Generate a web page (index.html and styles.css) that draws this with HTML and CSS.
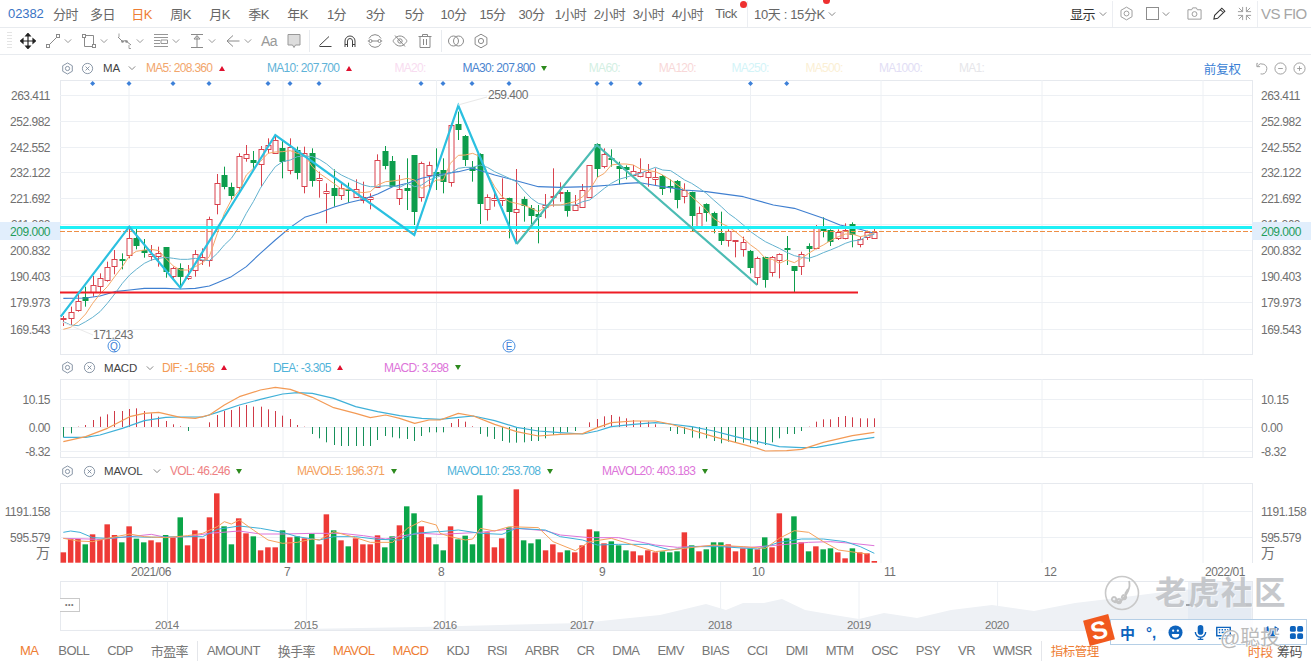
FILE: index.html
```html
<!DOCTYPE html>
<html lang="zh">
<head>
<meta charset="utf-8">
<title>02382</title>
<link rel="stylesheet" href="styles.css">
</head>
<body>
<svg class="defs" width="0" height="0">
  <symbol id="gear" viewBox="0 0 16 16"><path d="M8 1.2l5.9 3.4v6.8L8 14.8l-5.9-3.4V4.6z" fill="none" stroke="currentColor" stroke-linejoin="round"/><circle cx="8" cy="8" r="2.6" fill="none" stroke="currentColor"/></symbol>
  <symbol id="close" viewBox="0 0 16 16"><circle cx="8" cy="8" r="6.3" fill="none" stroke="currentColor"/><path d="M5.6 5.6l4.8 4.8M10.4 5.6l-4.8 4.8" stroke="currentColor"/></symbol>
  <symbol id="chev" viewBox="0 0 8 8"><path d="M.8 2.4L4 5.6l3.2-3.2" fill="none" stroke="currentColor"/></symbol>
</svg>
<div class="app">
  <header class="topbar">
    <span class="code">02382</span>
    <span class="tab tab-first">分时</span><span class="tab">多日</span><span class="tab active">日K</span><span class="tab">周K</span><span class="tab">月K</span><span class="tab">季K</span><span class="tab">年K</span><span class="tab">1分</span><span class="tab">3分</span><span class="tab">5分</span><span class="tab">10分</span><span class="tab">15分</span><span class="tab">30分</span><span class="tab">1小时</span><span class="tab">2小时</span><span class="tab">3小时</span><span class="tab">4小时</span>
    <span class="tab tab-tick">Tick<i class="dot"></i></span>
    <span class="vsep"></span>
    <span class="multi">10天 : 15分K<i class="dot dot-b"></i></span>
    <svg class="chev"><use href="#chev"/></svg>
    <span class="spacer"></span>
    <span class="show">显示</span>
    <svg class="chev chev-show"><use href="#chev"/></svg>
    <span class="vsep vsep-r"></span>
    <svg class="ico ico-gear"><use href="#gear"/></svg>
    <span class="square"></span>
    <svg class="chev chev-sq"><use href="#chev"/></svg>
    <svg class="ico ico-cam" viewBox="0 0 16 16"><path d="M1 4h4l1-2h4l1 2h4v10H1z" fill="none" stroke="currentColor"/><circle cx="8" cy="8.6" r="2.6" fill="none" stroke="currentColor"/></svg>
    <svg class="ico ico-pen" viewBox="0 0 16 16"><path d="M2 14l.8-4L10.500 2.300l3.200 3.200L6 13.200zM9 4l3.200 3.200" fill="none" stroke="#333" stroke-width="1.100"/></svg>
    <svg class="ico ico-zip" viewBox="0 0 16 16"><path d="M6 1v5H1M10 1v5h5M6 15v-5H1M10 15v-5h5M6 6L2 2M10 6l4-4M6 10l-4 4M10 10l4 4" fill="none" stroke="currentColor"/></svg>
    <span class="vsep vsep-vs"></span>
    <span class="vs">VS FIO</span>
  </header>

  <nav class="toolbar">
    <span class="grip"></span>
    <svg class="t t-dark" viewBox="0 0 16 16"><path d="M8 1v14M1 8h14M8 .5L5.800 3h4.400zM8 15.500L5.800 13h4.400zM.5 8L3 5.800v4.400zM15.500 8L13 5.800v4.400z" fill="#222" stroke="#222" stroke-width="1.200"/></svg>
    <svg class="t" viewBox="0 0 16 16"><path d="M4.500 11.500l7-7" stroke="currentColor"/><rect x="1.500" y="11.500" width="3" height="3" fill="none" stroke="currentColor"/><rect x="11.500" y="1.500" width="3" height="3" fill="none" stroke="currentColor"/></svg><svg class="c"><use href="#chev"/></svg>
    <svg class="t" viewBox="0 0 16 16"><path d="M4 2.500h8.500V12M12 13.500H3.500V4" fill="none" stroke="currentColor"/><rect x="1.500" y="1.500" width="3" height="3" fill="none" stroke="currentColor"/><rect x="11.500" y="11.500" width="3" height="3" fill="none" stroke="currentColor"/></svg><svg class="c"><use href="#chev"/></svg>
    <svg class="t" viewBox="0 0 16 16"><path d="M1 4l4.500 4.500 3-1L14 12" fill="none" stroke="currentColor"/><circle cx="5.500" cy="8.500" r="1.300" fill="currentColor"/><circle cx="9.500" cy="8.500" r="1.300" fill="currentColor"/><path d="M2 .5v3.500M12 12v3.500h2" fill="none" stroke="currentColor" stroke-width=".8"/></svg><svg class="c"><use href="#chev"/></svg>
    <svg class="t" viewBox="0 0 16 16"><path d="M1 1.500h14M1 4.500h14M1 7.500h6M1 10.500h6M1 13.500h14M8 7h6.500v3.500H8z" fill="none" stroke="currentColor" stroke-width=".9"/></svg><svg class="c"><use href="#chev"/></svg>
    <svg class="t" viewBox="0 0 16 16"><path d="M2 1.500h12M2 14.500h12M8 3v11.500M5 6l3-3.500L11 6z" fill="none" stroke="currentColor"/></svg><svg class="c"><use href="#chev"/></svg>
    <svg class="t" viewBox="0 0 16 16"><path d="M14.500 8H2M8 2.500L2 8l6 5.500" fill="none" stroke="currentColor"/></svg><svg class="c"><use href="#chev"/></svg>
    <span class="aa">Aa</span>
    <svg class="t t-g" viewBox="0 0 16 16"><path d="M2 1.500h12V12H9.500L8 14.500 6.500 12H2z" fill="#ddd" stroke="#999"/></svg>
    <span class="tsep"></span>
    <svg class="t t-dk" viewBox="0 0 16 16"><path d="M2.500 13.500h12M2.500 12.500L12 3.500" fill="none" stroke="currentColor"/></svg>
    <svg class="t t-dk" viewBox="0 0 16 16"><path d="M3 14V8a5 5 0 0 1 10 0v6M5.500 14V8a2.500 2.500 0 0 1 5 0v6M3 11.500h2.500M10.500 11.500H13" fill="none" stroke="currentColor"/></svg>
    <svg class="t" viewBox="0 0 16 16"><path d="M2 5.500a6.600 6.600 0 0 1 12 0M2 10.500a6.600 6.600 0 0 0 12 0M.8 8h14.400" fill="none" stroke="currentColor"/><circle cx="3.500" cy="8" r="1.500" fill="#fff" stroke="currentColor"/><circle cx="12.500" cy="8" r="1.500" fill="#fff" stroke="currentColor"/></svg>
    <svg class="t" viewBox="0 0 16 16"><path d="M1 8s2.500-5 7-5 7 5 7 5-2.500 5-7 5-7-5-7-5zM3 2.500l10 11" fill="none" stroke="currentColor"/><circle cx="8" cy="8" r="2.200" fill="none" stroke="currentColor"/></svg>
    <svg class="t" viewBox="0 0 16 16"><path d="M1.500 3.500h13M5.500 3.500V1.500h5v2M3 3.500V14.500h10V3.500M6.500 6v6M9.500 6v6" fill="none" stroke="currentColor"/></svg>
    <span class="tsep tsep-b"></span>
    <svg class="t" viewBox="0 0 16 16"><circle cx="5.500" cy="8" r="5" fill="none" stroke="currentColor"/><circle cx="10.500" cy="8" r="5" fill="none" stroke="currentColor"/></svg>
    <svg class="t"><use href="#gear"/></svg>
  </nav>

  <div class="head">
    <svg class="hi"><use href="#gear"/></svg>
    <svg class="hi hi-x1"><use href="#close"/></svg>
    <span class="name name-ma">MA</span>
    <svg class="chev chev-ma"><use href="#chev"/></svg>
    <span class="val c-ma5">MA5: 208.360<i class="up"></i></span>
    <span class="val c-ma10">MA10: 207.700<i class="up"></i></span>
    <span class="val c-ma20">MA20:</span>
    <span class="val c-ma30">MA30: 207.800<i class="down"></i></span>
    <span class="val c-ma60">MA60:</span>
    <span class="val c-ma120">MA120:</span>
    <span class="val c-ma250">MA250:</span>
    <span class="val c-ma500">MA500:</span>
    <span class="val c-ma1000">MA1000:</span>
    <span class="val c-ma1">MA1:</span>
    <span class="spacer"></span>
    <span class="adj">前复权</span>
    <svg class="hr" viewBox="0 0 14 14"><path d="M3 1.500h-1v3.500h3.500M2.500 4.500A5.500 5.500 0 1 1 6 12.800" fill="none" stroke="currentColor"/></svg>
    <svg class="hr" viewBox="0 0 14 14"><circle cx="7" cy="7" r="6" fill="none" stroke="currentColor"/><path d="M4.500 7h5" stroke="currentColor"/></svg>
    <svg class="hr" viewBox="0 0 14 14"><circle cx="7" cy="7" r="6" fill="none" stroke="currentColor"/><path d="M4.500 7h5M7 4.500v5" stroke="currentColor"/></svg>
  </div>
  <svg id="main" class="plot plot-main" viewBox="0 80 1311 275"></svg>

  <div class="head head-sub">
    <svg class="hi"><use href="#gear"/></svg>
    <svg class="hi hi-x2"><use href="#close"/></svg>
    <span class="name name-macd">MACD</span>
    <svg class="chev chev-macd"><use href="#chev"/></svg>
    <span class="val c-dif">DIF: -1.656<i class="up"></i></span>
    <span class="val c-dea">DEA: -3.305<i class="up"></i></span>
    <span class="val c-macd">MACD: 3.298<i class="down"></i></span>
  </div>
  <svg id="macd" class="plot plot-macd" viewBox="0 379 1311 79"></svg>

  <div class="head head-vol">
    <svg class="hi"><use href="#gear"/></svg>
    <svg class="hi hi-x2"><use href="#close"/></svg>
    <span class="name name-vol">MAVOL</span>
    <svg class="chev chev-vol"><use href="#chev"/></svg>
    <span class="val c-vol">VOL: 46.246<i class="down"></i></span>
    <span class="val c-v5">MAVOL5: 196.371<i class="down"></i></span>
    <span class="val c-v10">MAVOL10: 253.708<i class="down"></i></span>
    <span class="val c-v20">MAVOL20: 403.183<i class="down"></i></span>
  </div>
  <svg id="vol" class="plot plot-vol" viewBox="0 483 1311 98"></svg>
  <div class="navwrap">
    <svg id="nav" class="plot plot-nav" viewBox="0 581 1311 50"></svg>
    <span class="more">•••</span>
  </div>

  <footer class="bottom">
    <span class="b b-ma on">MA</span><span class="b">BOLL</span><span class="b">CDP</span><span class="b">市盈率</span><span class="bsep"></span><span class="b">AMOUNT</span><span class="b">换手率</span><span class="b on">MAVOL</span><span class="b on">MACD</span><span class="b">KDJ</span><span class="b">RSI</span><span class="b">ARBR</span><span class="b">CR</span><span class="b">DMA</span><span class="b">EMV</span><span class="b">BIAS</span><span class="b">CCI</span><span class="b">DMI</span><span class="b">MTM</span><span class="b">OSC</span><span class="b">PSY</span><span class="b">VR</span><span class="b">WMSR</span><span class="bsep"></span><span class="b on mgr">指标管理</span>
    <span class="spacer"></span>
    <span class="b on b-r">时段</span><span class="b b-r2">筹码</span>
  </footer>
</div>

<div class="watermark">
  <svg class="wm-logo" viewBox="0 0 36 36"><circle cx="18" cy="18" r="16.500" fill="none" stroke="#c9c9c9" stroke-width="1.600"/><path d="M25 6c2 6-2 14-7 19-3 2-7 3-9 1M10 22a2.200 2.200 0 1 0 .1 0M15 24a2.200 2.200 0 1 0 .1 0M20 20a2.200 2.200 0 1 0 .1 0M24 14l-3 5" fill="none" stroke="#c4c4c4" stroke-width="1.800"/></svg>
  <span class="wm-text">老虎社区</span>
</div>
<div class="ime">
  <span class="ime-s"><b>S</b></span>
  <div class="ime-bar">
    <b class="ime-zh">中</b>
    <b class="ime-p">°,</b>
    <svg class="ime-i" viewBox="0 0 16 16"><circle cx="8" cy="8" r="7.500"/><circle cx="5.500" cy="6" r="1.200" fill="#fff"/><circle cx="10.500" cy="6" r="1.200" fill="#fff"/><path d="M4 9.500h8a4 4 0 0 1-8 0z" fill="#fff"/></svg>
    <svg class="ime-i ime-mic" viewBox="0 0 16 16"><rect x="5" y="0" width="6" height="10.500" rx="3"/><path d="M2.500 7.500a5.500 5.500 0 0 0 11 0M8 13v3M5 15.500h6" fill="none" stroke="#0d63bd" stroke-width="1.500"/></svg>
    <svg class="ime-i ime-kb" viewBox="0 0 16 16"><path d="M.8 2.500h14.400v9H.8zM3 5h1.500M6 5h1.500M9 5h1.500M12 5h1M3 8h1.500M6 8h4.500M12 8h1M3 14.500h10" fill="none" stroke="#0d63bd" stroke-width="1.500"/></svg>
    <svg class="ime-i" viewBox="0 0 16 16"><path d="M4.500 1L0 4l2 3.500 2-1V15h8V6.500l2 1L16 4l-4.500-3a3.500 3.500 0 0 1-7 0z"/></svg>
    <svg class="ime-i" viewBox="0 0 16 16"><rect x="1" y="1" width="6.300" height="6.300" rx="1.800"/><rect x="8.700" y="1" width="6.300" height="6.300" rx="1.800"/><rect x="1" y="8.700" width="6.300" height="6.300" rx="1.800"/><rect x="8.700" y="8.700" width="6.300" height="6.300" rx="1.800"/></svg>
  </div>
  <span class="ime-mark">@聪投</span>
</div>
<script src="chart.js"></script>
</body>
</html>
```
FILE: styles.css
```css
* { box-sizing: border-box; }
html, body { margin: 0; padding: 0; background: #fff; }
body {
  width: 1311px; height: 669px; overflow: hidden; position: relative;
  font-family: "Liberation Sans", "Noto Sans CJK SC", sans-serif;
  color: #666;
}
i { font-style: normal; }
.defs { position: absolute; }
.app { display: flex; flex-direction: column; height: 669px; }
.spacer { flex: 1; }

/* top bar */
.topbar {
  height: 28px; flex: none; display: flex; align-items: center;
  border-bottom: 1px solid #e8ebef; font-size: 13px; letter-spacing: -.5px; white-space: nowrap;
}
.code { width: 48px; padding-left: 8px; color: #3a74c4; letter-spacing: -.1px; }
.tab { width: 39px; text-align: center; color: #666; position: relative; flex: none; }
.tab-first { width: 35px; }
.tab.active { color: #ee7d33; }
.tab-tick { margin-left: 3px; width: 32px; }
.dot { position: absolute; width: 7px; height: 7px; border-radius: 50%; background: #ee3030; right: -5px; top: -5px; }
.vsep { width: 1px; height: 26px; background: #eceef2; margin-left: 5px; flex: none; }
.multi { margin-left: 6px; color: #666; position: relative; letter-spacing: -.35px; }
.dot-b { right: -5px; top: -7px; }
.chev { width: 8px; height: 8px; color: #888; flex: none; margin-left: 3px; }
.show { color: #333; }
.chev-show { margin-left: 4px; }
.vsep-r { margin-left: 5px; }
.ico { width: 15px; height: 15px; color: #999; flex: none; display: block; }
.ico-gear { margin-left: 6px; }
.square { width: 13px; height: 13px; border: 1px solid #8d8d8d; margin-left: 12px; flex: none; }
.chev-sq { margin-left: 3px; }
.ico-cam { margin-left: 17px; }
.ico-pen { margin-left: 10px; }
.ico-zip { margin-left: 10px; }
.vsep-vs { margin-left: 5px; }
.vs { font-size: 15px; color: #a6a6a6; margin-left: 3px; letter-spacing: -.6px; width: 50px; }

/* toolbar */
.toolbar {
  height: 27px; flex: none; display: flex; align-items: center; padding-left: 7px;
  border-bottom: 1px solid #e8ebef; color: #8a8a8a;
}
.grip { width: 5px; height: 18px; margin-right: 8px; background: repeating-linear-gradient(#e4e4e4 0 1px, transparent 1px 3px); flex: none; }
.t { width: 16px; height: 16px; flex: none; margin-right: 9px; display: block; }
.t-dark { color: #222; }
.t-dk { color: #444; }
.toolbar .t:has(+ .c) { margin-right: 3px; }
.c { width: 8px; height: 8px; color: #999; flex: none; margin-right: 9px; }
.aa { width: 16px; margin-right: 9px; font-size: 14px; color: #999; letter-spacing: -.5px; flex: none; text-align: center; }
.tsep { width: 1px; height: 22px; background: #e8ebef; margin: 0 7px 0 -2px; flex: none; }
.tsep-b { margin: 0 6px 0 -1px; }

/* pane heads */
.head {
  height: 25px; flex: none; display: flex; align-items: center; font-size: 12px;
  letter-spacing: -.7px; white-space: nowrap; padding-left: 61px; padding-top: 1px;
}
.head-sub { height: 24px; }
.hi { width: 13px; height: 13px; color: #6f7f92; flex: none; }
.hi-x1 { margin-left: 7px; }
.hi-x2 { margin-left: 9px; }
.name { color: #444; letter-spacing: -.2px; font-size: 11.500px; flex: none; }
.name-ma { margin-left: 9px; width: 25px; }
.name-macd { margin-left: 8px; width: 42px; }
.name-vol { margin-left: 8px; width: 49px; }
.chev-ma, .chev-macd, .chev-vol { margin-left: 0; }
.val { flex: none; }
.chev-ma + .val { margin-left: 10px; }
.chev-macd + .val { margin-left: 8px; }
.chev-vol + .val { margin-left: 9px; }
.up, .down { display: inline-block; margin-left: 6.500px; vertical-align: 1.500px; width: 0; height: 0; border-left: 3px solid transparent; border-right: 3px solid transparent; }
.up { border-bottom: 5px solid #e0102f; }
.down { border-top: 5px solid #2d8a1e; }
.c-ma5 { color: #f2a66c; width: 121px; } .c-ma10 { color: #5fb3d8; width: 127.500px; } .c-ma20 { color: #f8dcf0; width: 68px; }
.c-ma30 { color: #4a84cf; width: 126.300px; } .c-ma60 { color: #d3efe3; width: 70px; } .c-ma120 { color: #f8d8d8; width: 72.600px; }
.c-ma250 { color: #d3f4f8; width: 74px; } .c-ma500 { color: #fbefd4; width: 73.500px; } .c-ma1000 { color: #e2def5; width: 80px; } .c-ma1 { color: #e6e6ea; }
.c-dif { color: #f39a55; width: 111px; } .c-dea { color: #4fb3d9; width: 111px; } .c-macd { color: #dd74d9; }
.c-vol { color: #ee8183; width: 127px; } .c-v5 { color: #f3a05d; width: 150px; } .c-v10 { color: #4fb3d9; width: 155px; } .c-v20 { color: #dd74d9; }
.adj { color: #3a7fd5; font-size: 12.500px; letter-spacing: -.1px; margin-right: 14px; }
.hr { width: 13px; height: 13px; color: #999; margin-right: 6px; flex: none; }
.hr:last-child { margin-right: 5px; }

/* plots */
.plot { display: block; width: 1311px; flex: none; }
.plot-main { height: 275px; }
.plot-macd { height: 79px; }
.plot-vol { height: 98px; }
.plot-nav { height: 50px; }
.navwrap { position: relative; flex: none; height: 50px; }
.more {
  position: absolute; left: 60px; top: 17px; width: 20px; height: 14px; border: 1px solid #c9c9c9; border-left: 0;
  font-size: 7px; line-height: 12px; text-align: center; color: #777; letter-spacing: .5px; background: #fff;
}
.ax { font-family: "Liberation Sans", sans-serif; font-size: 12px; letter-spacing: -.5px; fill: #707070; }
.ax-cjk { font-family: "Noto Sans CJK SC", sans-serif; font-size: 14px; letter-spacing: 0; }
.ax-last { fill: #1f9d5b; }
.ax-nav { fill: #777; font-size: 11.500px; }

/* bottom */
.bottom {
  flex: 1; display: flex; align-items: center; font-size: 13px; letter-spacing: -.6px; white-space: nowrap;
  padding-left: 20px; padding-top: 1px; color: #777;
}
.b { margin-right: 18px; flex: none; }
.b-ma { margin-right: 20px; }
.b.on { color: #ee7d33; }
.bsep { width: 1px; height: 20px; background: #e4e6ea; margin: 0 9px 0 -9px; flex: none; }
.mgr { margin-right: 0; font-size: 12.500px; letter-spacing: -.45px; }
.b-r { margin-right: 4px; letter-spacing: -.45px; }
.b-r2 { margin-right: 9px; color: #555; letter-spacing: -.45px; }

/* overlays */
.watermark { position: absolute; left: 1104px; top: 575px; display: flex; align-items: center; }
.wm-logo { width: 36px; height: 36px; margin-right: 15px; }
.wm-text { font-size: 31.500px; letter-spacing: 1.500px; color: #c2c4c8; font-weight: 700; line-height: 36px; text-shadow: 1px 1px 0 rgba(255,255,255,.7); opacity: .92; }
.ime { position: absolute; left: 1085px; top: 615px; width: 224px; height: 34px; }
.ime-bar {
  position: absolute; left: 25px; top: 4px; width: 197px; height: 26px; background: rgba(255,255,255,.86);
  border: 1px solid #b5cfe6; display: flex; align-items: center; gap: 10px; padding-left: 9px; color: #0d63bd; font-size: 15px;
}
.ime-s {
  position: absolute; left: 1px; top: 2px; width: 26px; height: 26px; background: #f1591e; transform: rotate(-15deg); z-index: 1;
  display: flex; align-items: center; justify-content: center; color: #fff; font-size: 25px; line-height: 26px;
}
.ime-zh { font-size: 15px; width: 15px; margin-right: 1px; }
.ime-p { width: 12px; font-size: 15px; }
.ime-i { width: 15px; height: 15px; fill: #0d63bd; flex: none; }
.ime-mic { margin-right: -2px; }
.ime-kb { margin-right: 23px; }
.ime-mark {
  position: absolute; left: 135px; top: 11px; font-size: 20px; color: #b3b3b3; line-height: 24px; letter-spacing: 0;
  text-shadow: 1px 0 0 #fff, -1px 0 0 #fff, 0 1px 0 #fff; opacity: .9;
}
```
FILE: chart.js
```javascript
(function () {
  var GRID = '#edf0f4', EDGE = '#e6e9ee', RED = '#d9434e', GREEN = '#0d9d4c', BRED = '#ee3a36', BGREEN = '#0aa548';
  var VX = [129, 283, 436.5, 597, 750.5, 881, 1042, 1203];
  var L = 60, R = 1252;
  function px(i) { return 63.3 + 7.306 * i; }
  function Y(base, z) { return base + z / 3; }
  function line(x1, y1, x2, y2, c, w, extra) {
    return '<line x1="' + x1 + '" y1="' + y1 + '" x2="' + x2 + '" y2="' + y2 + '" stroke="' + c + '" stroke-width="' + (w || 1) + '" ' + (extra || '') + '/>';
  }
  function rect(x, y, w, h, fill, stroke) {
    return '<rect x="' + x + '" y="' + y + '" width="' + w + '" height="' + h + '" fill="' + fill + '"' + (stroke ? ' stroke="' + stroke + '"' : '') + '/>';
  }
  function text(x, y, s, cls, anchor) {
    return '<text class="ax ' + (cls || '') + '" x="' + x + '" y="' + y + '"' + (anchor ? ' text-anchor="' + anchor + '"' : '') + '>' + s + '</text>';
  }
  // a, b: arrays of [zoomX, zoomY]; the second part starts 1320 zoom units further right
  function poly(a, b, base, c, w) {
    var pts = a.map(function (p) { return (p[0] / 3) + ',' + Y(base, p[1]); });
    (b || []).forEach(function (p) { pts.push((p[0] + 1320) / 3 + ',' + Y(base, p[1])); });
    return '<polyline fill="none" stroke="' + c + '" stroke-width="' + (w || 1) + '" stroke-linejoin="round" points="' + pts.join(' ') + '"/>';
  }
  function frame(top, bottom, hs) {
    var s = rect(L + .5, top + .5, R - L, bottom - top, '#fff', EDGE);
    VX.forEach(function (x) { s += line(x, top, x, bottom, GRID); });
    hs.forEach(function (y) { s += line(L, y + .5, R, y + .5, GRID); });
    return s;
  }

  /* candles: high, low, top, bottom, up */
  var C = [
    [678,708,684,686,1],[650,705,667,686,1],[605,665,632,658,1],[590,650,622,635,0],[558,620,586,608,1],[550,610,565,590,1],[515,575,530,568,1],[480,553,508,530,1],
    [490,538,508,514,0],[410,505,445,497,1],[412,478,445,470,0],[447,503,481,491,0],[465,512,492,498,1],[470,530,489,497,1],[472,563,472,548,0],[530,565,535,560,1],
    [520,592,535,563,0],[525,570,558,564,1],[480,560,493,540,1],[475,525,502,510,1],[380,530,388,512,1],[252,373,278,340,1],[230,298,255,290,0],[278,330,290,317,0],
    [190,305,198,290,1],[165,215,193,205,1],[183,238,210,220,0],[168,290,178,222,1],[145,190,165,178,1],[135,190,150,188,1],[150,265,175,218,0],[145,253,172,240,1],
    [170,268,180,250,0],[170,310,188,288,1],[175,290,190,275,0],[245,323,265,271,1],[280,400,303,310,1],[238,350,295,320,0],[280,330,295,316,1],[278,338,298,300,0],
    [268,320,296,320,1],[275,340,322,330,1],[310,358,320,325,1],[193,290,210,290,1],[168,238,184,230,0],[198,290,214,292,0],[255,345,298,325,1],[205,360,294,302,0],
    [195,405,195,365,0],[215,335,220,322,1],[215,300,226,255,1],[175,300,245,257,0],[205,310,240,275,0],[100,290,104,275,1],[65,150,103,122,0],[135,228,138,210,0],
    [213,275,230,243,0],[190,402,193,342,0],[313,392,320,355,1],[300,350,325,331,1],[265,348,325,332,1],[323,445,325,368,0],[237,460,358,367,1],[320,395,328,348,0],
    [345,402,355,378,0],[345,460,372,380,0],[312,385,345,352,1],[235,350,317,319,1],[277,335,307,309,1],[300,380,306,362,0],[315,360,344,358,1],[282,352,300,352,1],
    [225,320,225,320,1],[160,262,162,236,0],[175,235,192,228,1],[178,230,205,212,0],[215,283,228,236,0],[226,268,230,240,0],[225,260,242,255,1],[205,262,245,257,1],
    [222,290,247,263,1],[235,285,260,267,1],[255,315,258,296,0],[268,308,287,292,0],[270,355,274,332,0],[280,340,301,319,1],[305,425,307,380,0],[350,415,370,410,1],
    [340,395,343,371,0],[365,430,370,408,0],[365,465,430,455,0],[418,470,422,448,1],[450,502,450,453,1],[440,500,455,475,1],[480,550,483,533,0],[500,585,505,563,1],
    [500,593,502,570,0],[498,560,502,548,1],[490,565,491,508,1],[438,525,475,482,0],[528,607,528,542,0],[485,555,493,530,1],[460,515,467,476,0],[405,478,415,476,1],
    [382,442,409,423,0],[418,468,420,455,0],[418,450,426,445,1],[400,448,420,445,1],[397,472,402,435,0],[440,472,447,463,1],[422,450,426,442,1],[410,447,426,445,1]
  ];

  var ma5a = [[190,718],[212,712],[235,695],[257,672],[278,640],[300,612],[322,590],[344,560],[367,530],[389,497],[409,484],[433,480],[454,478],[476,482],[497,505],[520,528],[541,540],[563,540],[586,530],[608,518],[628,500],[652,430],[673,370],[694,330],[718,300],[739,255],[760,235],[781,215],[804,190],[826,186],[848,185],[871,182],[892,190],[914,195],[937,230],[958,250],[980,265],[1001,280],[1024,297],[1045,298],[1067,305],[1090,308],[1111,305],[1133,285],[1157,275],[1178,273],[1199,270],[1222,265],[1244,270],[1265,295],[1287,285],[1309,270]];
  var ma5b = [[10,270],[31,220],[55,196],[76,195],[98,190],[121,200],[142,250],[164,290],[186,320],[208,335],[229,340],[250,345],[274,355],[295,365],[316,352],[339,345],[361,345],[382,340],[406,335],[428,320],[449,300],[472,262],[493,250],[514,225],[536,222],[558,222],[580,225],[601,237],[625,242],[646,245],[668,255],[692,270],[712,285],[734,300],[755,320],[778,340],[799,360],[821,385],[844,400],[865,410],[886,425],[910,445],[932,465],[953,480],[976,505],[997,508],[1018,520],[1040,510],[1063,518],[1085,505],[1106,490],[1130,475],[1150,465],[1171,452],[1195,440],[1216,432],[1237,432],[1261,440],[1283,435],[1303,428]];
  var ma10a = [[190,695],[212,705],[235,707],[257,695],[278,682],[300,665],[322,640],[344,612],[367,580],[389,555],[409,538],[433,520],[454,510],[476,505],[497,502],[520,505],[541,508],[563,508],[586,505],[608,510],[628,512],[652,490],[673,465],[694,445],[718,410],[739,370],[760,335],[781,295],[804,260],[826,230],[848,215],[871,210],[892,200],[914,198],[937,200],[958,208],[980,222],[1001,240],[1024,255],[1045,265],[1067,275],[1090,285],[1111,290],[1133,290],[1157,287],[1178,288],[1199,292],[1222,280],[1244,290],[1265,285],[1287,270],[1309,262]];
  var ma10b = [[10,255],[31,250],[55,235],[76,232],[98,232],[121,225],[142,232],[164,245],[186,255],[208,265],[229,275],[250,300],[274,325],[295,340],[316,345],[339,345],[361,345],[382,345],[406,345],[428,335],[449,330],[472,312],[493,295],[514,280],[536,268],[558,262],[580,255],[601,250],[625,240],[646,232],[668,240],[692,242],[712,255],[734,270],[755,280],[778,295],[799,310],[821,330],[844,350],[865,370],[886,385],[910,405],[932,425],[953,440],[976,455],[997,465],[1018,475],[1040,487],[1063,497],[1085,502],[1106,505],[1130,497],[1150,488],[1171,480],[1195,470],[1216,460],[1237,453],[1261,450],[1283,437],[1303,433]];
  var ma30a = [[190,625],[257,624],[300,618],[344,605],[389,600],[433,595],[497,595],[541,597],[586,595],[628,588],[652,578],[694,560],[739,530],[781,490],[826,450],[871,412],[914,382],[958,368],[1001,352],[1045,338],[1090,328],[1133,312],[1178,290],[1222,280],[1265,265],[1309,255]];
  var ma30b = [[55,245],[98,235],[164,255],[229,272],[295,290],[361,292],[449,290],[514,285],[558,280],[601,278],[668,290],[734,300],[799,305],[910,320],[1000,345],[1063,355],[1150,385],[1200,405],[1260,418],[1303,430]];

  /* main pane */
  var PRICE = [[95,'263.411'],[121,'252.982'],[147,'242.552'],[172.500,'232.122'],[198.500,'221.692'],[224.500,'211.262'],[250.500,'200.832'],[276.500,'190.403'],[302.500,'179.973'],[329,'169.543']];
  var s = frame(80, 354, PRICE.map(function (p) { return Math.floor(p[0]); }));
  PRICE.forEach(function (p) {
    s += text(50, p[0] + 4.500, p[1], '', 'end') + text(1261, p[0] + 4.500, p[1]);
  });
  [92.600,129,173,209,268,290,319,421,443,472,509,597,611,640,750.500,786.700].forEach(function (x) {
    s += '<path d="M' + x + ' 81l2.500 2.500-2.500 2.500-2.500-2.500z" fill="#3d80d8"/>';
  });
  C.forEach(function (c, i) {
    var x = Math.round(px(i)) + .5, col = c[4] ? RED : GREEN;
    s += line(x, Y(90, c[0]), x, Y(90, c[1]), col);
    var t = Y(90, c[2]), b = Y(90, c[3]);
    if (c[4]) s += rect(x - 2.500, Math.round(t) + .5, 5, Math.max(1, Math.round(b - t)), '#fff', col);
    else s += rect(x - 3, Math.round(t), 6, Math.max(2, Math.round(b - t)), col);
  });
  s += poly(ma30a, ma30b, 90, '#3f7fd0', 1.100) + poly(ma10a, ma10b, 90, '#63b2cf', 1) + poly(ma5a, ma5b, 90, '#f5a868', 1);
  s += line(L, 231.500, R, 231.500, '#ee8f45', 1, 'stroke-dasharray="5 2"');
  s += line(L, 227.500, R, 227.500, '#1ff0f6', 3);
  s += line(L, 292.500, 858, 292.500, '#ee1c25', 2);
  s += '<polyline fill="none" stroke="#2bc0e0" stroke-width="2.200" points="60.700,316.700 129.300,226.700 180.300,287.700 275.300,135 414.300,235 458.300,105.700 516.700,244"/>';
  s += '<polyline fill="none" stroke="#4cbcb4" stroke-width="2.200" points="516.700,244 596.700,145 757.300,285"/>';
  s += rect(0, 222, 60, 18, '#e1eefc') + rect(1252, 222, 59, 18, '#e1eefc');
  s += text(50, 235.500, '209.000', 'ax-last', 'end') + text(1261, 235.500, '209.000', 'ax-last');
  s += line(458, 105, 487, 97, '#e8e8e8') + text(488, 99, '259.400');
  s += line(62, 322, 93, 335, '#eaeaea') + text(93, 339, '171.243');
  [[114, 'Q'], [509, 'E']].forEach(function (m) {
    s += '<circle cx="' + m[0] + '" cy="346" r="6" fill="#fff" stroke="#4a8fe0"/><text x="' + m[0] + '" y="349.500" text-anchor="middle" class="ax" style="fill:#3d80d8;font-size:10px;letter-spacing:0">' + m[1] + '</text>';
  });
  document.getElementById('main').innerHTML = s;

  /* MACD pane */
  var M = [247,235,215,210,195,185,178,168,168,162,160,168,175,185,198,208,214,228,217,217,202,180,168,165,155,150,155,155,163,168,182,192,210,215,237,250,262,270,273,273,273,273,273,255,243,247,250,252,258,243,232,232,232,204,192,200,214,237,245,252,258,263,263,262,258,258,250,240,235,232,228,217,202,192,184,180,185,190,195,198,200,208,217,228,237,237,248,250,250,258,265,260,262,263,265,268,270,262,250,237,237,228,215,200,193,193,186,183,187,190,190,190];
  s = frame(379, 457, [399, 427, 451]);
  [[399,'10.15'],[427,'0.00'],[451,'-8.32']].forEach(function (p) {
    s += text(50, p[0] + 4.500, p[1], '', 'end') + text(1261, p[0] + 4.500, p[1]);
  });
  M.forEach(function (z, i) {
    var x = Math.round(px(i)) + .5;
    if (z === 217) return;
    s += line(x, 427, x, Y(355, z), z < 217 ? '#cf3a48' : '#17905a');
  });
  s += poly([[190,247],[257,247],[300,240],[367,220],[433,197],[497,187],[541,186],[608,186],[652,172],[718,150],[781,133],[848,117],[892,113],[937,115],[1001,130],[1067,155],[1133,170],[1199,182],[1265,190],[1320,193]],
    [[55,187],[100,183],[164,197],[230,217],[295,228],[361,233],[428,237],[472,228],[514,215],[580,208],[646,203],[690,207],[755,215],[821,228],[886,245],[953,260],[1018,275],[1085,278],[1130,277],[1195,265],[1237,257],[1303,247]], 355, '#3fb0d8', 1.200);
  s += poly([[190,260],[257,245],[322,220],[389,185],[433,175],[476,172],[541,187],[586,190],[628,180],[673,150],[718,125],[781,105],[826,97],[871,103],[937,127],[1001,158],[1067,175],[1111,188],[1157,180],[1199,190],[1244,205],[1287,195],[1320,195]],
    [[55,175],[100,183],[164,208],[230,230],[295,243],[361,238],[428,236],[472,218],[514,203],[580,198],[646,198],[690,207],[755,225],[821,245],[886,262],[953,280],[976,288],[1040,287],[1085,283],[1150,262],[1237,242],[1303,232]], 355, '#f39a55', 1.200);
  document.getElementById('macd').innerHTML = s;

  /* volume pane */
  var V = [592,552,552,568,538,553,508,540,562,514,551,562,556,562,540,547,487,571,526,551,487,415,514,568,490,535,544,586,577,577,526,547,544,550,536,568,478,526,556,574,550,568,568,541,577,544,511,454,475,514,547,568,586,514,553,542,568,421,532,577,550,517,403,556,565,553,586,568,592,586,592,571,523,529,565,559,571,586,589,601,586,592,589,592,589,532,571,589,583,562,562,568,589,580,580,583,547,577,475,550,484,562,589,574,583,580,592,610,580,592,595,618];
  s = frame(483, 563, [511, 537]);
  s += rect(L, 563, R - L + 1, 19, '#fff') + line(L, 581.500, R, 581.500, EDGE);
  [[511,'1191.158'],[537,'595.579']].forEach(function (p) {
    s += text(50, p[0] + 4.500, p[1], '', 'end') + text(1261, p[0] + 4.500, p[1]);
  });
  s += text(50, 558, '万', 'ax-cjk', 'end') + text(1261, 558, '万', 'ax-cjk');
  V.forEach(function (z, i) {
    var x = px(i) - 2.700, y = Y(355, z);
    s += rect(x, y, 5.500, 562.700 - y, C[i][4] ? BRED : BGREEN);
  });
  s += poly([[190,550],[300,553],[389,545],[454,538],[497,547],[563,545],[628,535],[718,528],[781,537],[848,537],[937,535],[1024,535],[1090,542],[1157,552],[1222,540],[1265,535],[1320,538]],
    [[121,532],[229,520],[316,527],[361,540],[449,548],[536,548],[646,570],[712,577],[821,572],[932,577],[1018,570],[1106,562],[1171,560],[1237,565],[1303,572]], 355, '#dd74d9', 1);
  s += poly([[190,532],[212,528],[240,532],[278,548],[322,550],[389,545],[454,547],[541,545],[608,545],[652,523],[718,513],[781,520],[848,532],[892,545],[958,555],[1001,545],[1067,545],[1133,553],[1199,555],[1244,535],[1309,530],[1320,530]],
    [[55,525],[121,535],[186,538],[229,520],[316,525],[361,545],[428,555],[472,570],[536,568],[625,568],[692,585],[755,575],[844,575],[953,582],[1018,562],[1085,552],[1150,552],[1216,560],[1261,575],[1303,595]], 355, '#3fb0d8', 1);
  s += poly([[190,550],[235,558],[278,560],[322,550],[389,537],[433,545],[497,548],[563,542],[608,535],[652,515],[673,500],[694,507],[718,495],[760,525],[804,555],[848,565],[892,562],[937,552],[958,555],[1001,530],[1067,548],[1111,562],[1178,562],[1222,520],[1265,498],[1309,510],[1320,535]],
    [[31,545],[76,555],[98,552],[121,520],[164,528],[208,515],[295,518],[339,560],[406,587],[449,560],[514,550],[580,570],[646,590],[734,580],[821,570],[910,575],[976,580],[1018,550],[1063,527],[1106,532],[1150,560],[1195,585],[1283,597]], 355, '#f5a25c', 1);
  [[131,'2021/06'],[284,'7'],[438,'8'],[599,'9'],[752,'10'],[884,'11'],[1044,'12'],[1205,'2022/01']].forEach(function (p) {
    s += text(p[0], 576, p[1]);
  });
  document.getElementById('vol').innerHTML = s;

  /* navigator */
  var area = [[60,630],[300,629],[420,627],[500,625],[582,623],[620,619],[660,615],[681,610],[706,604],[726,610],[743,603],[764,603],[782,599],[805,610],[834,615],[859,619],[884,613],[917,618],[951,610],[992,605],[1034,611],[1075,603],[1117,598],[1179,590],[1251,587],[1251,630]];
  s = rect(L + .5, 581.500, R - L, 49, '#fff', EDGE);
  [167.500,306.400,445,582.500,720.600,859,997.600].forEach(function (x) { s += line(x, 582, x, 630, GRID); });
  s += '<polygon fill="#eef1f5" points="' + area.map(function (p) { return p.join(','); }).join(' ') + '"/>';
  s += rect(1188, 582, 64, 48, '#dfe6f0').replace('/>', ' opacity=".55"/>');
  s += line(1186, 605, 1192, 605, '#555') + line(1246, 605, 1252, 605, '#555');
  [[155,'2014'],[294,'2015'],[433,'2016'],[570,'2017'],[708,'2018'],[847,'2019'],[985,'2020']].forEach(function (p) {
    s += text(p[0], 629, p[1], 'ax-nav');
  });
  document.getElementById('nav').innerHTML = s;
})();
```
